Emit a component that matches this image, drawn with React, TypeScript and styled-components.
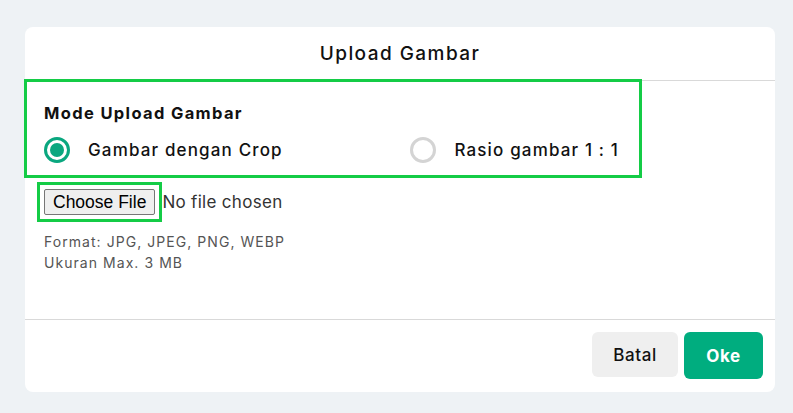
import React from "react";
import styled, { createGlobalStyle } from "styled-components";

const GlobalStyle = createGlobalStyle`
  html, body { margin: 0; padding: 0; }
  body {
    background: #eef2f5;
    font-family: Inter, "DejaVu Sans", sans-serif;
    color: #111;
  }
`;

const Card = styled.div`
  margin: 27px 18px 21px 25px;
  width: 750px;
  height: 365px;
  background: #fff;
  border-radius: 8px;
  display: flex;
  flex-direction: column;
`;

const Header = styled.div`
  height: 53px;
  border-bottom: 1px solid #d9d9d9;
  display: flex;
  align-items: center;
  justify-content: center;
`;

const Title = styled.h2`
  margin: 0;
  font-size: 19px;
  font-weight: 500;
  letter-spacing: 1.45px;
  color: #111;
`;

const Body = styled.div`
  flex: 1;
  display: flex;
  flex-direction: column;
  align-items: flex-start;
`;

const ModeSection = styled.fieldset`
  margin: 1px 0 0 2px;
  width: 612px;
  height: 93px;
  box-sizing: border-box;
  border: none;
  outline: 3px solid #14cc46;
  padding: 19px 20px 0 17px;
  display: flex;
  flex-direction: column;
  gap: 12px;
`;

const SectionTitle = styled.legend`
  float: left;
  padding: 0;
  font-size: 16.5px;
  font-weight: 700;
  letter-spacing: 1.35px;
  line-height: 24px;
`;

const Options = styled.div`
  display: flex;
  justify-content: space-between;
  align-items: center;
`;

const Option = styled.label`
  display: flex;
  align-items: center;
  gap: 18px;
  font-size: 17px;
  font-weight: 500;
  letter-spacing: 1.15px;
  cursor: pointer;
`;

const RadioMark = styled.span<{ $checked: boolean }>`
  width: 26px;
  height: 26px;
  box-sizing: border-box;
  border-radius: 50%;
  border: 3px solid ${(p) => (p.$checked ? "#0aa77f" : "#d4d4d4")};
  display: flex;
  align-items: center;
  justify-content: center;
  &::after {
    content: "";
    width: 14px;
    height: 14px;
    border-radius: 50%;
    background: ${(p) => (p.$checked ? "#0aa77f" : "transparent")};
  }
`;

const HiddenInput = styled.input`
  display: none;
`;

const FileRow = styled.div`
  margin: 7px 0 0 12px;
  display: flex;
  align-items: center;
`;

const ButtonFrame = styled.span`
  display: inline-flex;
  padding: 4px;
  border: 3px solid #14cc46;
`;

const FileButton = styled.label`
  display: inline-flex;
  align-items: center;
  height: 26px;
  box-sizing: border-box;
  padding: 0 8px;
  font-family: "Liberation Sans", Arial, sans-serif;
  font-size: 17.5px;
  color: #000;
  background: #efefef;
  border: 1px solid #767676;
  border-radius: 2px;
  cursor: pointer;
`;

const FileName = styled.span`
  font-size: 17px;
  letter-spacing: 0.3px;
  color: #333;
`;

const Hint = styled.p`
  margin: 9px 0 0 19px;
  font-size: 14px;
  line-height: 21px;
  letter-spacing: 1.05px;
  color: #555;
`;

const Footer = styled.div`
  height: 73px;
  border-top: 1px solid #d9d9d9;
  box-sizing: border-box;
  display: flex;
  justify-content: flex-end;
  align-items: flex-start;
  gap: 6px;
  padding: 12px 12px 0 0;
`;

const Button = styled.button<{ $primary?: boolean }>`
  border: none;
  border-radius: 6px;
  font-family: Inter, "DejaVu Sans", sans-serif;
  font-size: 17px;
  letter-spacing: 0.6px;
  font-weight: ${(p) => (p.$primary ? 700 : 500)};
  color: ${(p) => (p.$primary ? "#fff" : "#111")};
  background: ${(p) => (p.$primary ? "#00ad7f" : "#efefef")};
  width: ${(p) => (p.$primary ? "79px" : "86px")};
  height: ${(p) => (p.$primary ? "47px" : "45px")};
  cursor: pointer;
`;

export default function App() {
  const [mode, setMode] = React.useState("crop");
  const [fileName, setFileName] = React.useState("");
  return (
    <>
      <GlobalStyle />
      <Card>
        <Header>
          <Title>Upload Gambar</Title>
        </Header>
        <Body>
          <ModeSection>
            <SectionTitle>Mode Upload Gambar</SectionTitle>
            <Options>
              <Option>
                <HiddenInput
                  type="radio"
                  name="mode"
                  checked={mode === "crop"}
                  onChange={() => setMode("crop")}
                />
                <RadioMark $checked={mode === "crop"} />
                Gambar dengan Crop
              </Option>
              <Option>
                <HiddenInput
                  type="radio"
                  name="mode"
                  checked={mode === "ratio"}
                  onChange={() => setMode("ratio")}
                />
                <RadioMark $checked={mode === "ratio"} />
                Rasio gambar 1 : 1
              </Option>
            </Options>
          </ModeSection>
          <FileRow>
            <ButtonFrame>
              <FileButton>
                <HiddenInput
                  type="file"
                  accept=".jpg,.jpeg,.png,.webp"
                  onChange={(e) => setFileName(e.target.files?.[0]?.name ?? "")}
                />
                Choose File
              </FileButton>
            </ButtonFrame>
            <FileName>{fileName || "No file chosen"}</FileName>
          </FileRow>
          <Hint>
            Format: JPG, JPEG, PNG, WEBP
            <br />
            Ukuran Max. 3 MB
          </Hint>
        </Body>
        <Footer>
          <Button>Batal</Button>
          <Button $primary>Oke</Button>
        </Footer>
      </Card>
    </>
  );
}
